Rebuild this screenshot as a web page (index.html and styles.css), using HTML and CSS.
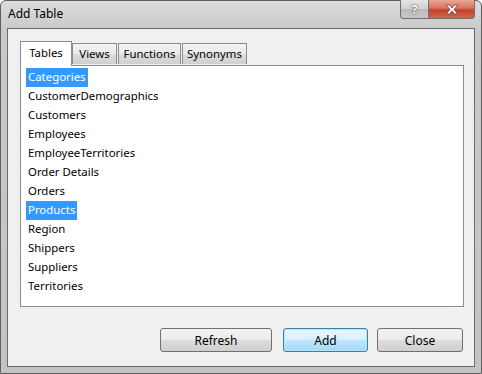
FILE: index.html
```html
<!DOCTYPE html>
<html>
<head>
<title>Add Table</title>
<link rel="stylesheet" href="styles.css">
</head>
<body>

<div class="window">
    <div class="titlebar">
        <span class="title">Add Table</span>
        <div class="controls">
            <div class="ctl help">?</div>
            <div class="ctl close">
                <svg width="16" height="11" viewBox="0 0 16 11">
                    <path d="M2 1 H5.5 L8 4 L10.5 1 H14 L10 5.5 L14 10 H10.5 L8 7 L5.5 10 H2 L6 5.5 Z" fill="#fff" stroke="#6b3a33" stroke-width="0.8"/>
                </svg>
            </div>
        </div>
    </div>

    <div class="client">
        <div class="tabs">
            <div class="tab active tab-tables">Tables</div>
            <div class="tab tab-views">Views</div>
            <div class="tab tab-functions">Functions</div>
            <div class="tab tab-synonyms">Synonyms</div>
        </div>
        <div class="panel">
            <div class="item"><span class="sel">Categories</span></div>
            <div class="item"><span>CustomerDemographics</span></div>
            <div class="item"><span>Customers</span></div>
            <div class="item"><span>Employees</span></div>
            <div class="item"><span>EmployeeTerritories</span></div>
            <div class="item"><span>Order Details</span></div>
            <div class="item"><span>Orders</span></div>
            <div class="item"><span class="sel">Products</span></div>
            <div class="item"><span>Region</span></div>
            <div class="item"><span>Shippers</span></div>
            <div class="item"><span>Suppliers</span></div>
            <div class="item"><span>Territories</span></div>
        </div>
        <div class="buttons">
            <button class="btn refresh">Refresh</button>
            <button class="btn add">Add</button>
            <button class="btn closebtn">Close</button>
        </div>
    </div>
</div>

</body>
</html>
```

FILE: styles.css
```css
body {
    margin: 0;
    width: 482px;
    height: 374px;
    overflow: hidden;
    font-family: "Noto Sans", "Open Sans", sans-serif;
    font-size: 11.4px;
    color: #000;
}

.window {
    box-sizing: border-box;
    width: 482px;
    height: 374px;
    background: linear-gradient(180deg, #dcdcdc 0px, #c9c9c9 30px, #c3c3c3 100%);
    border: 1px solid #5f5f5f;
    border-radius: 6px 6px 0 0;
    padding: 0 6px 6px 6px;
    display: flex;
    flex-direction: column;
}

.titlebar {
    height: 27px;
    display: flex;
    align-items: flex-start;
}

.title {
    margin-top: 4px;
    margin-left: 1px;
    font-size: 12px;
    color: #000;
}

.controls {
    margin-left: auto;
    margin-right: 0;
    display: flex;
    margin-top: -1px;
}

.ctl {
    height: 19px;
    display: flex;
    align-items: center;
    justify-content: center;
    border: 1px solid #6f6f6f;
    border-top: none;
    box-sizing: border-box;
}

.help {
    width: 28px;
    border-radius: 0 0 0 4px;
    border-right: none;
    background: linear-gradient(180deg, #e6e6e6 0%, #cfcfcf 50%, #b9b9b9 51%, #c8c8c8 100%);
    color: #fff;
    font-weight: bold;
    font-size: 13px;
    text-shadow: 0 0 2px #555, 0 0 1px #333;
}

.close {
    width: 47px;
    border-radius: 0 0 4px 0;
    background: linear-gradient(180deg, #e8a696 0%, #d6745f 45%, #c4412a 55%, #d2664d 100%);
}

.client {
    flex: 1;
    background: #f0f0f0;
    border: 1px solid #6b6b6b;
    padding: 12px 10px 14px 12px;
    display: flex;
    flex-direction: column;
}

.tabs {
    display: flex;
    align-items: flex-end;
    height: 24px;
    position: relative;
    z-index: 1;
}

.tab {
    height: 21px;
    box-sizing: border-box;
    border: 1px solid #898c95;
    border-bottom: none;
    background: linear-gradient(180deg, #f2f2f2 0%, #ebebeb 50%, #dddddd 51%, #cfcfcf 100%);
    padding-top: 2px;
    text-align: center;
    margin-right: 1px;
    margin-bottom: 1px;
}

.tab.active {
    height: 25px;
    background: #fff;
    padding-top: 3px;
    margin-bottom: -1px;
    margin-right: 0;
}

.tab-tables {
    width: 52px;
}

.tab-views {
    width: 45px;
}

.tab-functions {
    width: 63px;
}

.tab-synonyms {
    width: 65px;
}

.panel {
    height: 242px;
    box-sizing: border-box;
    background: #fff;
    border: 1px solid #898c95;
    padding: 2px 5px;
}

.item {
    height: 19px;
    line-height: 18px;
}

.item span {
    display: inline-block;
    padding: 0 2px;
    height: 19px;
}

.item .sel {
    background: #3399ff;
    color: #fff;
}

.buttons {
    margin-top: auto;
    display: flex;
    justify-content: flex-end;
    padding-right: 1px;
}

.btn {
    font-family: "Noto Sans", "Open Sans", sans-serif;
    font-size: 12px;
    height: 24px;
    border: 1px solid #707070;
    border-radius: 3px;
    background: linear-gradient(180deg, #f2f2f2 0%, #ebebeb 50%, #dddddd 51%, #cfcfcf 100%);
    color: #000;
    padding: 0;
}

.refresh {
    width: 112px;
    margin-right: 11px;
}

.add {
    width: 85px;
    margin-right: 9px;
    border-color: #3c7fb1;
    background: linear-gradient(180deg, #eaf6fd 0%, #d9f0fc 50%, #bee6fd 51%, #a7d9f5 100%);
    box-shadow: inset 0 0 0 1px #b4e4fc;
}

.closebtn {
    width: 86px;
}
```
